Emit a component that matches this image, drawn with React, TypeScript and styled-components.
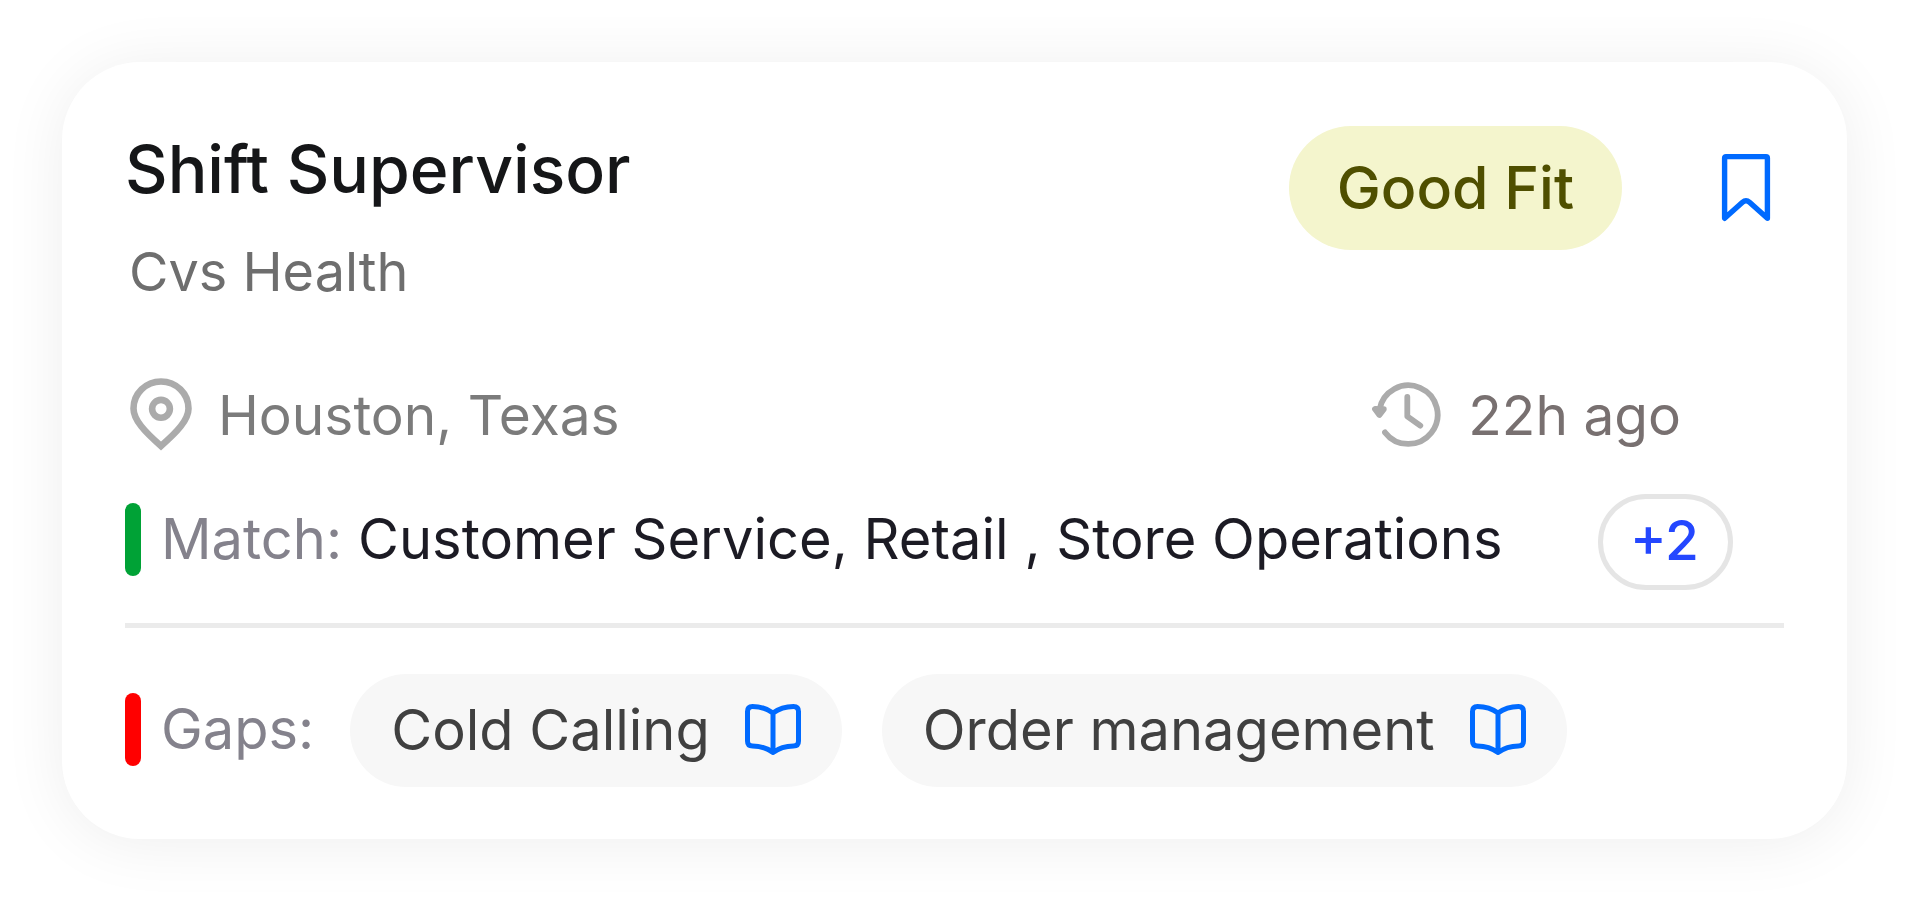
import React from "react";
import styled, { createGlobalStyle } from "styled-components";

const GlobalStyle = createGlobalStyle`
  * { box-sizing: border-box; }
  body {
    margin: 0;
    background: #ffffff;
    font-family: Inter, "Liberation Sans", sans-serif;
  }
  button {
    margin: 0;
    border: 0;
    padding: 0;
    background: none;
    font: inherit;
    cursor: pointer;
  }
  svg { display: block; flex: none; }
`;

const Page = styled.main`
  padding: 62px;
`;

const Card = styled.article`
  display: flex;
  flex-direction: column;
  padding: 64px 63px 52px;
  border-radius: 78px;
  background: #ffffff;
  box-shadow: 0 4px 64px rgba(0, 0, 0, 0.07);
`;

const Header = styled.header`
  display: flex;
  justify-content: space-between;
  align-items: flex-start;
`;

const Title = styled.h1`
  margin: 0;
  font-size: 66px;
  line-height: 86px;
  font-weight: 500;
  color: #151618;
`;

const Company = styled.p`
  margin: 24px 0 0;
  padding-left: 4px;
  font-size: 54px;
  line-height: 72px;
  color: #6e6e6e;
`;

const HeaderActions = styled.div`
  display: flex;
  align-items: center;
  gap: 86px;
`;

const FitBadge = styled.span`
  padding: 0 48px;
  border-radius: 62px;
  background: #f4f5cd;
  color: #4f4f00;
  font-size: 59px;
  line-height: 124px;
  font-weight: 500;
`;

const BookmarkButton = styled.button`
  color: #006aff;
`;

const MetaRow = styled.div`
  display: flex;
  justify-content: space-between;
  margin-top: 70px;
  padding: 0 103px 0 5px;
`;

const Meta = styled.span<{ $color: string }>`
  display: flex;
  align-items: center;
  gap: 26px;
  font-size: 55px;
  line-height: 72px;
  color: ${(p) => p.$color};
  svg { color: #ababab; }
`;

const SkillRow = styled.section`
  display: flex;
  align-items: flex-start;
`;

const MatchRow = styled(SkillRow)`
  margin-top: 43px;
  padding-right: 51px;
  line-height: 90px;
`;

const GapRow = styled(SkillRow)`
  gap: 36px;
  line-height: 110px;
`;

const Marker = styled.span<{ $color: string }>`
  flex: none;
  width: 16px;
  height: 73px;
  margin-right: 20px;
  border-radius: 8px;
  background: ${(p) => p.$color};
`;

const Label = styled.h2`
  display: flex;
  align-items: center;
  margin: 0;
  font-size: 56px;
  font-weight: 400;
  color: #84828c;
`;

const Skills = styled.p`
  margin: 0 auto 0 16px;
  font-size: 56px;
  color: #1c1b24;
`;

const MoreButton = styled.button`
  width: 135px;
  height: 96px;
  padding: 0 2px 4px 0;
  border: 5px solid #e5e5e5;
  border-radius: 48px;
  font-size: 55px;
  line-height: 72px;
  font-weight: 500;
  color: #2447ff;
`;

const Divider = styled.hr`
  width: 100%;
  height: 5px;
  margin: 33px 0 46px;
  border: 0;
  background: #ebebeb;
`;

const Chips = styled.div`
  display: flex;
  gap: 40px;
`;

const Chip = styled.button`
  display: flex;
  align-items: center;
  gap: 35px;
  height: 113px;
  padding: 0 41px 2px;
  border-radius: 57px;
  background: #f7f7f7;
  font-size: 56px;
  line-height: 72px;
  color: #404040;
  svg { color: #006aff; }
`;

const BookmarkIcon = () => (
  <svg width="76" height="76" viewBox="0 0 76 76" fill="none" stroke="currentColor" strokeWidth="5.4" strokeLinejoin="round" aria-hidden="true">
    <path d="M18 6.6H58Q59.4 6.6 59.4 8V68.3L41.5 52.3Q38 49.2 34.5 52.3L16.6 68.3V8Q16.6 6.6 18 6.6Z" />
  </svg>
);

const PinIcon = () => (
  <svg width="62" height="73" viewBox="0 0 62 73" fill="none" stroke="currentColor" strokeWidth="6.6" aria-hidden="true">
    <path d="M31 68C15 54 3.5 42 3.5 30.5A27.5 27 0 0 1 58.5 30.5C58.5 42 47 54 31 68Z" />
    <circle cx="31" cy="30.8" r="8.9" />
  </svg>
);

const HistoryIcon = () => (
  <svg width="70" height="66" viewBox="0 0 70 66" fill="none" stroke="currentColor" strokeWidth="5.8" strokeLinecap="round" strokeLinejoin="round" aria-hidden="true">
    <path d="M7.4 28A29.3 29.3 0 1 1 13 50.4" />
    <path d="M3 27L11.8 27.2L7.4 33Z" fill="currentColor" />
    <path d="M35.3 15V34.4L48.3 43.6" />
  </svg>
);

const BookIcon = () => (
  <svg width="56" height="51" viewBox="0 0 56 51" fill="none" stroke="currentColor" strokeWidth="5" strokeLinejoin="round" aria-hidden="true">
    <path d="M28 9C22 4.5 15 2.5 7.5 2.5Q2.5 2.5 2.5 7.5V37Q2.5 42 7.5 42C15 42 22 44 28 48.5C34 44 41 42 48.5 42Q53.5 42 53.5 37V7.5Q53.5 2.5 48.5 2.5C41 2.5 34 4.5 28 9ZM28 9V48" />
  </svg>
);

const gaps = ["Cold Calling", "Order management"];

export default function App() {
  return (
    <>
      <GlobalStyle />
      <Page>
        <Card>
          <Header>
            <div>
              <Title>Shift Supervisor</Title>
              <Company>Cvs Health</Company>
            </div>
            <HeaderActions>
              <FitBadge>Good Fit</FitBadge>
              <BookmarkButton type="button" aria-label="Save job">
                <BookmarkIcon />
              </BookmarkButton>
            </HeaderActions>
          </Header>
          <MetaRow>
            <Meta $color="#7b7b7b">
              <PinIcon />
              Houston, Texas
            </Meta>
            <Meta $color="#787070">
              <HistoryIcon />
              22h ago
            </Meta>
          </MetaRow>
          <MatchRow>
            <Label>
              <Marker $color="#00a236" />
              Match:
            </Label>
            <Skills>Customer Service, Retail , Store Operations</Skills>
            <MoreButton type="button">+2</MoreButton>
          </MatchRow>
          <Divider />
          <GapRow>
            <Label>
              <Marker $color="#ff0000" />
              Gaps:
            </Label>
            <Chips>
              {gaps.map((gap) => (
                <Chip type="button" key={gap}>
                  {gap}
                  <BookIcon />
                </Chip>
              ))}
            </Chips>
          </GapRow>
        </Card>
      </Page>
    </>
  );
}
